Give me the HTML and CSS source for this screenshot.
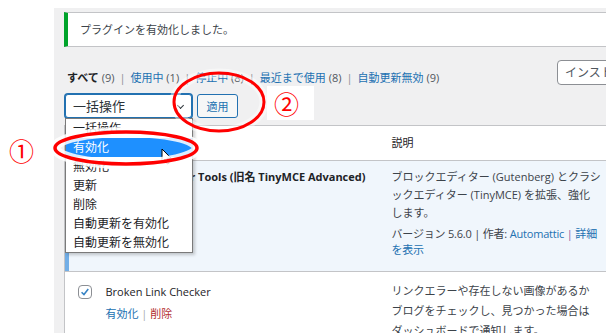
FILE: index.html
```html
<!DOCTYPE html>
<html lang="ja">
<head>
	<meta charset="UTF-8">
	<title>プラグイン</title>
	<link rel="stylesheet" href="styles.css">
</head>
<body>
	<div class="admin">
		<div class="menu"></div>
		<div class="wrap">
			<div class="notice"><p>プラグインを有効化しました。</p></div>
			<div class="top">
				<ul class="views">
					<li class="current">すべて <span class="count">(9)</span></li>
					<li><i>|</i><a>使用中 <span class="count">(1)</span></a></li>
					<li><i>|</i><a>停止中 <span class="count">(8)</span></a></li>
					<li><i>|</i><a>最近まで使用 <span class="count">(8)</span></a></li>
					<li><i>|</i><a>自動更新無効 <span class="count">(9)</span></a></li>
				</ul>
				<input class="search" type="text" placeholder="インストール済みプラグインを検索...">
			</div>
			<div class="bulk">
				<div class="select">一括操作<span class="arrow"></span></div>
				<button>適用</button>
			</div>
			<table class="plugins">
				<colgroup>
					<col class="c-check">
					<col class="c-name">
					<col class="c-desc">
				</colgroup>
				<thead>
					<tr>
						<th class="check"><span class="box"></span></th>
						<th>プラグイン</th>
						<th>説明</th>
					</tr>
				</thead>
				<tbody>
					<tr class="active">
						<td class="check"><span class="box"></span></td>
						<td class="name">
							<strong>Advanced Editor Tools (旧名 TinyMCE Advanced)</strong>
							<div class="actions"><a>設定</a> | <a>無効化</a></div>
						</td>
						<td class="desc">
							<p>ブロックエディター (Gutenberg) とクラシ<br>ックエディター (TinyMCE) を拡張、強化<br>します。</p>
							<div class="meta">バージョン 5.6.0 | 作者: <a>Automattic</a> <i>|</i> <a>詳細<br>を表示</a></div>
						</td>
					</tr>
					<tr>
						<td class="check"><span class="box on"><svg viewBox="0 0 14 14"><path d="M3 7.2l2.8 2.8 5-6.4" fill="none" stroke="#3582c4" stroke-width="1.8"/></svg></span></td>
						<td class="name">
							<span class="title">Broken Link Checker</span>
							<div class="actions"><a>有効化</a> <i>|</i> <a class="delete">削除</a></div>
						</td>
						<td class="desc">
							<p class="loose">リンクエラーや存在しない画像があるか<br>ブログをチェックし、見つかった場合は<br>ダッシュボードで通知します。</p>
						</td>
					</tr>
				</tbody>
			</table>
		</div>
	</div>

	<!-- 開いたままのドロップダウン -->
	<ul class="dropdown">
		<li>一括操作</li>
		<li class="hover">有効化</li>
		<li>無効化</li>
		<li>更新</li>
		<li>削除</li>
		<li>自動更新を有効化</li>
		<li>自動更新を無効化</li>
	</ul>

	<!-- 注釈 -->
	<svg class="marks" width="606" height="333" viewBox="0 0 606 333">
		<path d="M162 149v13l3-3 2.2 5 2-.9-2.2-4.8h4.2z" fill="#fff" stroke="#000" stroke-width="1"/>
		<ellipse cx="126" cy="148" rx="71" ry="16" fill="none" stroke="#fff" stroke-width="10" opacity=".85"/>
		<ellipse cx="126" cy="148" rx="71" ry="16" fill="none" stroke="#f00" stroke-width="3.5"/>
		<ellipse cx="219" cy="102" rx="45" ry="29" fill="none" stroke="#fff" stroke-width="9" opacity=".45"/>
		<ellipse cx="219" cy="102" rx="45" ry="29" fill="none" stroke="#f00" stroke-width="3"/>
	</svg>
	<span class="num one">①</span>
	<span class="num two">②</span>
</body>
</html>
```

FILE: styles.css
```css
* {
	box-sizing: border-box;
}

body, ul, li, p, table, th, td {
	margin: 0;
	padding: 0;
}

body {
	width: 606px;
	height: 333px;
	overflow: hidden;
	position: relative;
	background-color: #fff;
	color: #3c434a;
	font-family: "Open Sans", "Noto Sans CJK JP", sans-serif;
	font-size: 11px;
}

a {
	color: #2271b1;
}

i {
	font-style: normal;
	color: #8c8f94;
}

.admin {
	display: flex;
	height: 100%;
}

.menu {
	flex: none;
	width: 54px;
}

.wrap {
	flex: none;
	width: 760px;
	margin-top: 8px;
	padding: 4px 0 0 10px;
	background-color: #f0f0f1;
}

.notice {
	width: 700px;
	height: 35px;
	padding: 1px 12px 0;
	background-color: #fff;
	border: 1px solid #c3c4c7;
	border-left: 4px solid #00a32a;
	color: #3c434a;
	line-height: 32px;
}

.top {
	display: flex;
	justify-content: space-between;
	align-items: flex-start;
	width: 653px;
	height: 26px;
	margin-top: 13px;
}

.views {
	display: flex;
	padding: 9px 0 0 3px;
	line-height: 17px;
	list-style-type: none;
}

.views i {
	margin: 0 5px;
}

.views .current {
	color: #1d2327;
	font-weight: bold;
}

.views .count {
	color: #50575e;
	font-weight: normal;
}

.search {
	width: 160px;
	height: 25px;
	padding: 0 7px;
	border: 1px solid #8c8f94;
	border-radius: 4px;
	font: inherit;
	font-size: 12px;
	color: #2c3338;
}

.search::placeholder {
	color: #50575e;
}

.bulk {
	display: flex;
	gap: 5px;
	height: 24px;
	margin: 8px 0 0 1px;
}

.select {
	position: relative;
	width: 127px;
	height: 24px;
	padding-left: 7px;
	border: 1px solid #2271b1;
	border-radius: 3px;
	box-shadow: 0 0 0 1px #2271b1;
	background-color: #fff;
	color: #2c3338;
	font-size: 13px;
	line-height: 22px;
}

.select .arrow {
	position: absolute;
	right: 8px;
	top: 8px;
	width: 5px;
	height: 5px;
	border-right: 1px solid #2c3338;
	border-bottom: 1px solid #2c3338;
	transform: rotate(45deg);
}

.bulk button {
	width: 41px;
	height: 24px;
	padding: 0;
	border: 1px solid #2271b1;
	border-radius: 3px;
	background-color: #f6f7f7;
	color: #2271b1;
	font: inherit;
}

.plugins {
	width: 560px;
	margin-top: 7px;
	table-layout: fixed;
	border-collapse: collapse;
	border: 1px solid #c3c4c7;
	background-color: #fff;
}

.c-check {
	width: 41px;
}

.c-name {
	width: 275px;
}

.c-desc {
	width: 244px;
}

.plugins th {
	height: 30px;
	padding: 5px 10px 7px 0;
	border-bottom: 1px solid #c3c4c7;
	color: #1d2327;
	font-weight: normal;
	text-align: left;
	line-height: 17px;
}

.plugins td {
	vertical-align: top;
	padding: 7px 10px 13px 0;
	line-height: 18px;
}

.plugins .check {
	padding-left: 13px;
	padding-top: 10px;
}

.plugins th.check {
	padding-top: 7px;
}

.plugins .desc, .plugins th:last-child {
	padding-left: 11px;
}

.plugins tr.active td {
	background-color: #f0f6fc;
	border-bottom: 1px solid #c3c4c7;
}

.plugins tr.active td:first-child {
	box-shadow: inset 4px 0 0 #72aee6;
}

.box {
	display: block;
	width: 14px;
	height: 14px;
	border: 1px solid #8c8f94;
	border-radius: 4px;
	background-color: #fff;
}

.box svg {
	display: block;
	width: 12px;
	height: 12px;
}

.name strong {
	color: #1d2327;
	font-weight: 700;
	white-space: nowrap;
}

.name .title {
	color: #1d2327;
}

.actions {
	margin-top: 4px;
}

.actions .delete {
	color: #b32d2e;
}

.actions i {
	color: #a7aaad;
}

.desc .meta {
	margin-top: 4px;
	line-height: 16px;
	letter-spacing: -0.2px;
}

.desc .meta i {
	color: #8c5e9e;
}

.desc .loose {
	line-height: 20px;
}

.plugins tr:last-child td {
	padding-top: 11px;
}

.plugins tr:last-child .check {
	padding-top: 13px;
}

.plugins tr:last-child .desc {
	padding-top: 9px;
}

.dropdown {
	position: absolute;
	left: 65px;
	top: 118px;
	width: 128px;
	list-style-type: none;
	background-color: #fff;
	border: 1px solid #7a7a7a;
	box-shadow: 2px 2px 3px rgba(0, 0, 0, .2);
	color: #1d2327;
	font-size: 12px;
}

.dropdown li {
	height: 19px;
	padding-left: 7px;
	line-height: 19px;
}

.dropdown .hover {
	background-color: #1e90ff;
	color: #fff;
}

.marks {
	position: absolute;
	left: 0;
	top: 0;
}

.num {
	position: absolute;
	color: #f00;
	font-family: "Noto Sans CJK JP", sans-serif;
	font-size: 25px;
	line-height: 30px;
}

.one {
	left: 9px;
	top: 135px;
}

.two {
	left: 267px;
	top: 86px;
	width: 47px;
	height: 34px;
	padding: 2px 0 0 7px;
	background-color: #fff;
}
```
